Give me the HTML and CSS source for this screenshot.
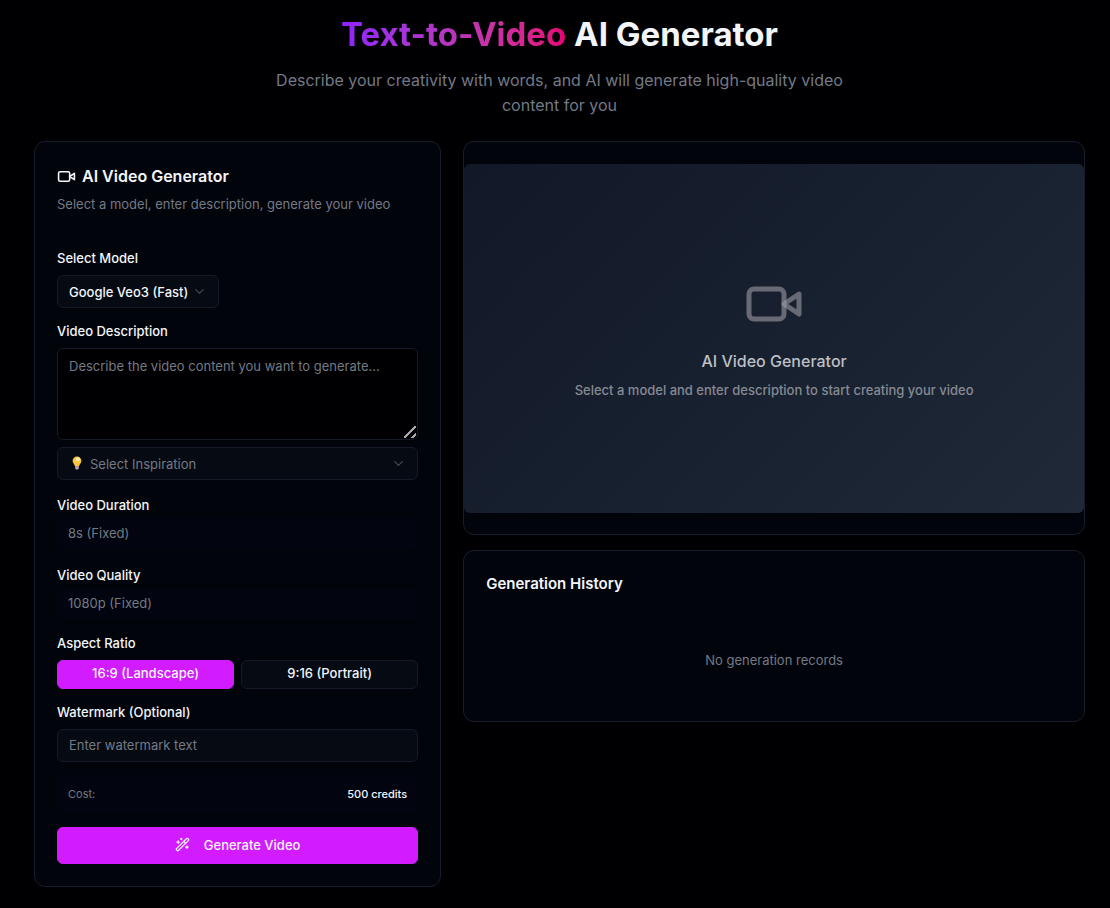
FILE: index.html
```html
<!DOCTYPE html>
<html lang="en">
<head>
    <meta charset="UTF-8">
    <meta name="viewport" content="width=device-width, initial-scale=1.0">
    <title>Text-to-Video AI Generator</title>
    <link rel="stylesheet" href="styles.css">
</head>
<body>
<main class="page">
    <header class="hero">
        <h1><span class="gradient-text">Text-to-Video</span> AI Generator</h1>
        <p>Describe your creativity with words, and AI will generate high-quality video content for you</p>
    </header>

    <div class="layout">
        <form class="card generator" onsubmit="return false">
            <div class="card-header">
                <h2>
                    <svg class="icon-title" viewBox="0 0 24 24" aria-hidden="true"><path d="m22 8-6 4 6 4V8Z"/><rect x="2" y="6" width="14" height="12" rx="2"/></svg>
                    AI Video Generator
                </h2>
                <p>Select a model, enter description, generate your video</p>
            </div>

            <div class="fields">
                <div class="field">
                    <label for="model">Select Model</label>
                    <div class="select-wrap select-model">
                        <select id="model">
                            <option>Google Veo3 (Fast)</option>
                        </select>
                        <svg class="chevron" viewBox="0 0 24 24" aria-hidden="true"><path d="m6 9 6 6 6-6"/></svg>
                    </div>
                </div>

                <div class="field">
                    <label for="description">Video Description</label>
                    <textarea id="description" placeholder="Describe the video content you want to generate..."></textarea>
                    <div class="select-wrap select-inspiration">
                        <svg class="bulb" viewBox="0 0 12 14" aria-hidden="true">
                            <path fill="#fbc43a" d="M6 .5a4.3 4.3 0 0 0-4.4 4.3c0 2.2 1.8 3 2.4 5.6h4c.6-2.6 2.4-3.4 2.4-5.6A4.3 4.3 0 0 0 6 .5Z"/>
                            <ellipse cx="6.8" cy="3.4" rx="2" ry="1.8" fill="#fff0b0"/>
                            <path fill="#b9a3b8" d="M4.2 10.3h3.6v2L7 13.5H5l-.8-1.2Z"/>
                        </svg>
                        <select id="inspiration" aria-label="Select Inspiration">
                            <option>Select Inspiration</option>
                        </select>
                        <svg class="chevron" viewBox="0 0 24 24" aria-hidden="true"><path d="m6 9 6 6 6-6"/></svg>
                    </div>
                </div>

                <div class="field field-fixed">
                    <h3>Video Duration</h3>
                    <p>8s (Fixed)</p>
                </div>

                <div class="field field-fixed">
                    <h3>Video Quality</h3>
                    <p>1080p (Fixed)</p>
                </div>

                <div class="field">
                    <h3>Aspect Ratio</h3>
                    <div class="ratios">
                        <button type="button" class="ratio active">16:9 (Landscape)</button>
                        <button type="button" class="ratio">9:16 (Portrait)</button>
                    </div>
                </div>

                <div class="field">
                    <label for="watermark">Watermark (Optional)</label>
                    <input type="text" id="watermark" placeholder="Enter watermark text">
                </div>

                <div class="cost">
                    <span>Cost:</span>
                    <strong>500 credits</strong>
                </div>

                <button type="submit" class="generate">
                    <svg class="icon-wand" viewBox="0 0 24 24" aria-hidden="true">
                        <path d="m21.64 3.64-1.28-1.28a1.21 1.21 0 0 0-1.72 0L2.36 18.64a1.21 1.21 0 0 0 0 1.72l1.28 1.28a1.2 1.2 0 0 0 1.72 0L21.64 5.36a1.2 1.2 0 0 0 0-1.72"/>
                        <path d="m14 7 3 3M5 6v4M19 14v4M10 2v2M7 8H3M21 16h-4M11 3H9"/>
                    </svg>
                    Generate Video
                </button>
            </div>
        </form>

        <div class="results">
            <section class="card preview-card">
                <div class="preview">
                    <svg class="icon-preview" viewBox="0 0 24 24" aria-hidden="true"><path d="m22 8-6 4 6 4V8Z"/><rect x="2" y="6" width="14" height="12" rx="2"/></svg>
                    <h3>AI Video Generator</h3>
                    <p>Select a model and enter description to start creating your video</p>
                </div>
            </section>

            <section class="card history">
                <h2>Generation History</h2>
                <p>No generation records</p>
            </section>
        </div>
    </div>
</main>
</body>
</html>
```
FILE: styles.css
```css
* {
    box-sizing: border-box;
}
body {
    margin: 0;
    background: #000003;
    color: #f3f5f9;
    font-family: Inter, "Liberation Sans", sans-serif;
    font-size: 13px;
    line-height: 18px;
    color-scheme: dark;
}
h1, h2, h3, p {
    margin: 0;
}
svg {
    fill: none;
    stroke: currentColor;
    stroke-width: 2;
    stroke-linecap: round;
    stroke-linejoin: round;
    flex-shrink: 0;
}
.page {
    padding: 15px 25px 20px 34px;
}

/* heading */
.hero {
    text-align: center;
    margin-bottom: 23px;
}
.hero h1 {
    font-size: 33px;
    line-height: 38px;
    font-weight: 700;
    margin-bottom: 15px;
}
.gradient-text {
    background: linear-gradient(to right in oklab, #9020ff, #e60076);
    -webkit-background-clip: text;
    background-clip: text;
    color: transparent;
}
.hero p {
    max-width: 600px;
    margin: 0 auto;
    font-size: 16px;
    line-height: 25px;
    color: #737a84;
}

.layout {
    display: grid;
    grid-template-columns: repeat(5, minmax(0, 1fr));
    gap: 22px;
    align-items: start;
}
.card {
    background: #02040c;
    border: 1px solid #171d2a;
    border-radius: 11px;
    padding: 22px;
}

/* form */
.generator {
    grid-column: span 2;
}
.card-header {
    margin-bottom: 36px;
}
.card-header h2 {
    display: flex;
    align-items: center;
    gap: 6px;
    font-size: 16px;
    line-height: 24px;
    font-weight: 600;
    margin-bottom: 7px;
}
.card-header p {
    color: #737a84;
}
.icon-title {
    width: 19px;
    height: 19px;
}
.fields {
    display: flex;
    flex-direction: column;
    gap: 14px;
}
.field label, .field h3 {
    display: block;
    font-size: 13px;
    font-weight: 500;
    margin-bottom: 8px;
}
select, input, textarea, button {
    font: inherit;
    color: inherit;
    border: 1px solid #141a27;
    border-radius: 6px;
    background: #060a13;
}
input, textarea {
    display: block;
    width: 100%;
    padding: 0 11px;
}
input {
    height: 33px;
    padding-bottom: 2px;
}
textarea {
    height: 92px;
    padding-top: 8px;
    background: #000002;
    resize: vertical;
    margin-bottom: 7px;
}
textarea::-webkit-resizer {
    background: linear-gradient(135deg, transparent 43%, #a8a8a8 43% 56%, transparent 56% 76%, #a8a8a8 76% 89%, transparent 89%) center / 12px 12px no-repeat;
}
::placeholder {
    color: #737a84;
    opacity: 1;
}
.select-wrap {
    position: relative;
}
.select-wrap select {
    display: block;
    appearance: none;
    width: 100%;
    height: 33px;
    padding: 0 28px 0 11px;
}
.select-model {
    width: 162px;
}
.select-model select {
    font-weight: 500;
}
.select-inspiration select {
    padding-left: 32px;
    color: #737a84;
}
.chevron {
    position: absolute;
    right: 12px;
    top: 9px;
    width: 15px;
    height: 15px;
    color: #444952;
    pointer-events: none;
}
.bulb {
    position: absolute;
    left: 14px;
    top: 9px;
    width: 12px;
    height: 14px;
    stroke: none;
    pointer-events: none;
}
.field-fixed {
    padding-top: 2px;
}
.field-fixed h3 {
    margin-bottom: 4px;
}
.field-fixed p {
    padding: 6px 11px 8px;
    border-radius: 6px;
    background: #02050f;
    color: #737a84;
}
.ratios {
    display: grid;
    grid-template-columns: 1fr 1fr;
    gap: 7px;
}
.ratio {
    height: 29px;
    padding: 0 0 3px;
    font-weight: 500;
    cursor: pointer;
}
.ratio.active, .generate {
    background: #d21cff;
    border-color: #d21cff;
}
.cost {
    display: flex;
    justify-content: space-between;
    align-items: center;
    height: 37px;
    padding: 0 11px 2px;
    border-radius: 6px;
    background: #02050f;
    font-size: 11px;
    color: #737a84;
}
.cost strong {
    font-weight: 500;
    color: #f3f5f9;
}
.generate {
    display: flex;
    align-items: center;
    justify-content: center;
    gap: 14px;
    height: 37px;
    padding: 0 0 2px;
    font-weight: 500;
    cursor: pointer;
}
.icon-wand {
    width: 15px;
    height: 15px;
}

/* right column */
.results {
    grid-column: span 3;
    display: flex;
    flex-direction: column;
    gap: 15px;
}
.preview-card {
    padding: 22px 0 21px;
}
.preview {
    aspect-ratio: 16 / 9;
    display: flex;
    flex-direction: column;
    align-items: center;
    justify-content: center;
    padding-bottom: 3px;
    border-radius: 6px;
    background: linear-gradient(135deg, #111827, #1f2937);
}
.icon-preview {
    width: 60px;
    height: 60px;
    margin-bottom: 15px;
    stroke: rgba(156, 156, 164, 0.6);
}
.preview h3 {
    font-size: 16px;
    line-height: 24px;
    font-weight: 500;
    color: #bcbfc5;
    margin-bottom: 8px;
}
.preview p {
    font-weight: 500;
    color: #868a93;
}
.history h2 {
    font-size: 15px;
    line-height: 22px;
    font-weight: 600;
    margin-bottom: 20px;
}
.history p {
    padding: 36px 0 30px;
    text-align: center;
    color: #737a84;
}
```
